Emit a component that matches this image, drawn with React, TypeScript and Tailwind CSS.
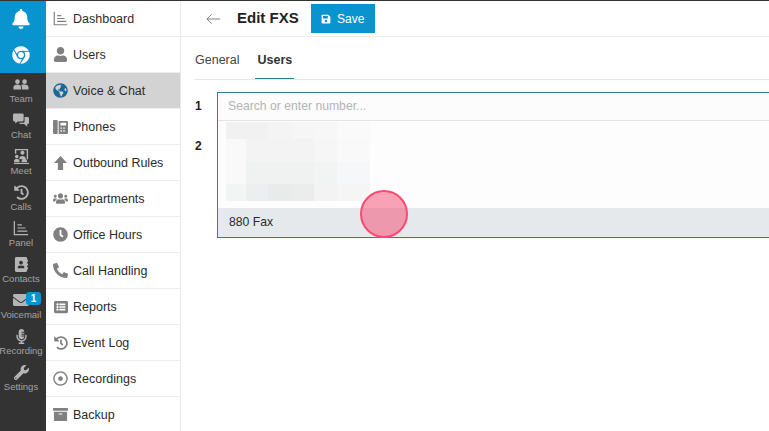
import type { ReactNode } from "react";
import {
	FaAddressBook,
	FaArchive,
	FaBell,
	FaChrome,
	FaClock,
	FaEnvelope,
	FaGlobeAmericas,
	FaHistory,
	FaListAlt,
	FaMicrophoneAlt,
	FaPhoneAlt,
	FaRegDotCircle,
	FaSave,
	FaUser,
	FaUsers,
	FaWrench,
} from "react-icons/fa";

type IconProps = { className?: string };

const ChartIcon = ({ className }: IconProps) => (
	<svg viewBox="0 0 18 18" className={className} fill="none" stroke="currentColor" strokeWidth="1.4">
		<path d="M1.5 1v15.5H17" />
		<path d="M5 5.500h5M5 9h9M5 12.500h11" />
	</svg>
);

const MeetIcon = ({ className }: IconProps) => (
	<svg viewBox="0 0 18 18" className={className} fill="currentColor">
		<path d="M2 1h14v11h-1.500V2.500h-11V6H2z" />
		<circle cx="10" cy="5" r="2.200" />
		<path d="M6.500 12c0-2.500 1.500-3.600 3.500-3.600s3.500 1.100 3.500 3.600z" />
		<circle cx="4" cy="9" r="1.900" />
		<path d="M1 15c0-2.400 1.200-3.500 3-3.500s3 1.100 3 3.500zM9 15c0-2.400 1.200-3.500 3-3.500s3 1.100 3 3.500z" />
		<path d="M1 15.800h16V17H1z" />
	</svg>
);

const TeamIcon = ({ className }: IconProps) => (
	<svg viewBox="0 0 18 12" className={className} fill="currentColor">
		<circle cx="5" cy="2.800" r="2.600" />
		<circle cx="13" cy="2.800" r="2.600" />
		<path d="M.5 11.500V9c0-2 1.800-3 4.500-3s4 1 4 3v2.500z" />
		<path d="M10 11.500V9c0-1.200-.3-2-1-2.500C9.800 6.200 11 6 13 6c2.700 0 4.500 1 4.500 3v2.500z" />
	</svg>
);

const ChatIcon = ({ className }: IconProps) => (
	<svg viewBox="0 0 18 16" className={className} fill="currentColor">
		<path d="M1.500 0h9A1.500 1.500 0 0 1 12 1.500v6A1.500 1.500 0 0 1 10.500 9H5.500L2.500 11.500V9h-1A1.500 1.500 0 0 1 0 7.500v-6A1.500 1.500 0 0 1 1.500 0z" />
		<path d="M13 4h3.500A1.500 1.500 0 0 1 18 5.500v5a1.500 1.500 0 0 1-1.500 1.500H16v3l-3.500-3H8.500A1.500 1.500 0 0 1 7 10.500h4.500A1.500 1.500 0 0 0 13 9z" />
	</svg>
);

const DeskPhoneIcon = ({ className }: IconProps) => (
	<svg viewBox="0 0 16 15" className={className} fill="currentColor">
		<path d="M1 0h3a1 1 0 0 1 1 1v13a1 1 0 0 1-1 1H1a1 1 0 0 1-1-1V1a1 1 0 0 1 1-1z" />
		<path
			fillRule="evenodd"
			d="M6 1h9a1 1 0 0 1 1 1v12a1 1 0 0 1-1 1H6zM8 3v3h6V3zM8 8v1.500h1.500V8zM11 8v1.500h1.500V8zM8 11v1.500h1.500V11zM11 11v1.500h1.500V11z"
		/>
	</svg>
);

const BigArrowUp = ({ className }: IconProps) => (
	<svg viewBox="0 0 14 15" className={className} fill="currentColor">
		<path d="M7 0l7 7.500H9.800V15H4.200V7.500H0z" />
	</svg>
);

const sideItems: { label: string; icon: ReactNode; badge?: string }[] = [
	{ label: "Team", icon: <TeamIcon className="w-[16px] h-[11px]" /> },
	{ label: "Chat", icon: <ChatIcon className="w-[16px] h-[15px]" /> },
	{ label: "Meet", icon: <MeetIcon className="size-[17px]" /> },
	{ label: "Calls", icon: <FaHistory className="size-[15px]" /> },
	{ label: "Panel", icon: <ChartIcon className="size-[16px]" /> },
	{ label: "Contacts", icon: <FaAddressBook className="size-[15px]" /> },
	{ label: "Voicemail", icon: <FaEnvelope className="size-[16px]" />, badge: "1" },
	{ label: "Recording", icon: <FaMicrophoneAlt className="size-[15px]" /> },
	{ label: "Settings", icon: <FaWrench className="size-[15px]" /> },
];

const navItems: { label: string; icon: ReactNode; active?: boolean }[] = [
	{ label: "Dashboard", icon: <ChartIcon className="size-[15px]" /> },
	{ label: "Users", icon: <FaUser className="size-[15px]" /> },
	{ label: "Voice & Chat", icon: <FaGlobeAmericas className="size-[15px] text-[#17699a]" />, active: true },
	{ label: "Phones", icon: <DeskPhoneIcon className="w-[15px] h-[14px]" /> },
	{ label: "Outbound Rules", icon: <BigArrowUp className="w-[13px] h-[14px]" /> },
	{ label: "Departments", icon: <FaUsers className="size-[15px]" /> },
	{ label: "Office Hours", icon: <FaClock className="size-[15px]" /> },
	{ label: "Call Handling", icon: <FaPhoneAlt className="size-[15px]" /> },
	{ label: "Reports", icon: <FaListAlt className="size-[14px]" /> },
	{ label: "Event Log", icon: <FaHistory className="size-[14px]" /> },
	{ label: "Recordings", icon: <FaRegDotCircle className="size-[15px]" /> },
	{ label: "Backup", icon: <FaArchive className="size-[15px]" /> },
];

// blurred-out contact names
const blurCells = [
	"#f1f1f1", "#f1f1f1", "#f4f4f4", "#f6f6f6", "#f7f7f7", "#fafafa",
	"#f9f9f9", "#f3f3f3", "#f3f3f3", "#f3f3f3", "#f6f6f6", "#f9f9f9",
	"#f9f9f9", "#f0f1f1", "#f0f1f1", "#f0f1f1", "#f2f3f3", "#f6f7f8",
	"#f3f4f4", "#edeeef", "#e9eaea", "#ebecec", "#f3f3f3", "#f5f5f5",
];

const App = () => {
	return (
		<div className="w-[769px] h-[431px] overflow-hidden flex flex-col bg-white font-['Liberation_Sans',Arial,sans-serif]">
			<div className="h-px shrink-0 bg-[#333333]" />

			<div className="flex flex-1 min-h-0">
				<aside className="w-[46px] shrink-0 bg-[#333333] flex flex-col">
					<div className="h-[72px] shrink-0 bg-[#0a94cf] flex flex-col items-center pr-[4px] text-white">
						<div className="h-[36px] flex items-center justify-center">
							<FaBell className="size-[20px]" />
						</div>
						<div className="h-[36px] flex items-center justify-center">
							<FaChrome className="size-[18px]" />
						</div>
					</div>

					{sideItems.map((item) => (
						<div key={item.label} className="relative h-[36px] shrink-0 flex flex-col items-center pr-[4px] text-[#a3a3a3]">
							<div className="h-[18px] mt-[2px] flex items-center justify-center text-[#b5b5b5]">{item.icon}</div>
							<span className="text-[9.5px] leading-[11px] whitespace-nowrap">{item.label}</span>
							{item.badge && (
								<span className="absolute right-[5px] top-[3px] w-[15px] h-[13px] rounded-[3px] bg-[#0a94cf] text-white text-[10px] leading-[13px] font-bold text-center">
									{item.badge}
								</span>
							)}
						</div>
					))}
				</aside>

				<nav className="w-[135px] shrink-0 border-r border-[#e8e8e8] flex flex-col">
					{navItems.map((item) => (
						<div
							key={item.label}
							className={`h-[36px] shrink-0 flex items-center border-b border-[#ececec] ${item.active ? "bg-[#d3d3d3]" : ""}`}
						>
							<div className="w-[27px] flex justify-center text-[#808080] pl-[2px]">{item.icon}</div>
							<span className="pt-px text-[12.5px] text-[#2b2b2b]">{item.label}</span>
						</div>
					))}
				</nav>

				<main className="relative flex-1 min-w-0 overflow-hidden">
					<header className="h-[36px] border-b border-[#ececec] flex items-center">
						<svg viewBox="0 0 16 12" className="w-[15px] h-[12px] ml-[25px] text-[#777777]" fill="none" stroke="currentColor" strokeWidth="1">
							<path d="M15 6H1M6 1 1 6l5 5" />
						</svg>
						<h1 className="ml-[16px] text-[15px] font-bold text-[#222222]">Edit FXS</h1>
						<button className="ml-[12px] w-[64px] h-[29px] bg-[#0a94cf] text-white text-[12px] flex items-center justify-center gap-[6px]">
							<FaSave className="size-[10px]" />
							Save
						</button>
					</header>

					<div className="ml-[14px] h-[43px] border-b border-[#e6e6e6] flex items-end gap-[16px]">
						<span className="h-[28px] text-[12.5px] text-[#444444]">General</span>
						<span className="h-[28px] px-[2px] border-b border-[#2e7f94] text-[12.5px] font-bold text-[#333333]">
							Users
						</span>
					</div>

					<div className="flex mt-[12px] ml-[14px]">
						<div className="w-[22px] shrink-0 text-[12px] font-bold text-[#222222]">
							<div className="h-[27px] flex items-center">1</div>
							<div className="mt-[18px]">2</div>
						</div>
						<div className="w-[600px] shrink-0 h-[146px] border border-[#2e7f94] flex flex-col">
							<div className="h-[28px] shrink-0 bg-[#fcfcfc] border-b border-[#e4e4e4] flex items-center pl-[10px] text-[12.2px] text-[#b4b4b4]">
								Search or enter number...
							</div>
							<div className="flex-1 bg-[#fdfdfd] pl-[8px] pt-[1px]">
								<div className="w-[144px] h-[79px] grid grid-cols-[20px_22px_24px_22px_23px_33px] grid-rows-[17px_23px_22px_17px]">
									{blurCells.map((color, i) => (
										<div key={i} style={{ backgroundColor: color }} />
									))}
								</div>
							</div>
							<div className="h-[29px] shrink-0 bg-[#e5e9eb] flex items-center pl-[11px] text-[12.2px] text-[#2b2b2b]">
								880 Fax
							</div>
						</div>
					</div>

					<div className="absolute left-[179px] top-[189px] size-[48px] rounded-full border-2 border-[#fb4a70] bg-[#f5486f]/50" />
				</main>
			</div>
		</div>
	);
};

export default App;
